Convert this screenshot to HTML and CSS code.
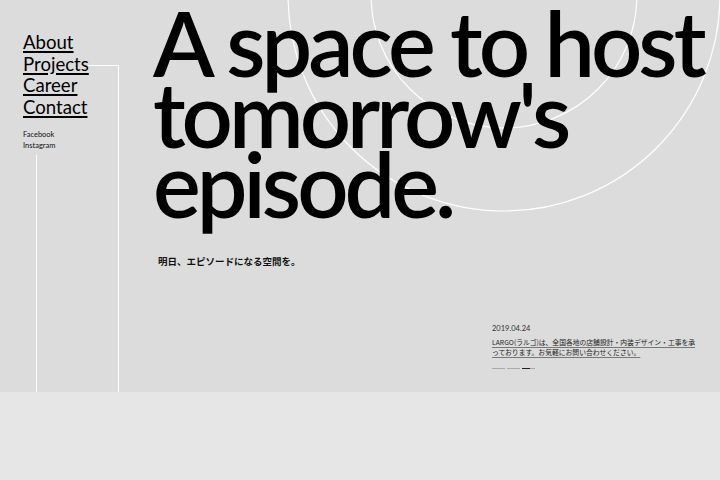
FILE: index.html
```html
<!DOCTYPE html>
<html lang="ja">
<head>
<meta charset="utf-8">
<title>LARGO</title>
<link rel="stylesheet" href="styles.css">
</head>
<body>
<section class="hero">
  <div class="frame" aria-hidden="true"></div>
  <svg class="rings" width="720" height="392" viewBox="0 0 720 392" aria-hidden="true">
    <circle cx="504" cy="-5" r="216" fill="none" stroke="#ffffff" stroke-width="1.2"/>
    <circle cx="504" cy="-5" r="133" fill="none" stroke="#ffffff" stroke-width="1.2"/>
  </svg>
  <nav class="nav">
    <ul class="menu">
      <li><a href="#">About</a></li>
      <li><a href="#">Projects</a></li>
      <li><a href="#">Career</a></li>
      <li><a href="#">Contact</a></li>
    </ul>
    <ul class="social">
      <li>Facebook</li>
      <li>Instagram</li>
    </ul>
  </nav>
  <main class="main">
    <h1 class="headline">A space to host<br>tomorrow's<br>episode.</h1>
    <p class="tagline">明日、エピソードになる空間を。</p>
    <div class="news">
      <p class="date">2019.04.24</p>
      <p class="news-text"><a href="#">LARGO(ラルゴ)は、全国各地の店舗設計・内装デザイン・工事を承<br>っております。お気軽にお問い合わせください。</a></p>
      <div class="dots"><span class="dot"></span><span class="dot"></span><span class="dot active"></span></div>
    </div>
  </main>
</section>
<section class="below"></section>
</body>
</html>
```

FILE: styles.css
```css
* { box-sizing: border-box; }
html, body { margin: 0; padding: 0; }
body {
  background: #e6e6e6;
  font-family: "Lato", "Noto Sans CJK JP", sans-serif;
  color: #000;
  width: 720px;
  height: 480px;
  overflow: hidden;
}
.hero {
  position: relative;
  height: 392px;
  background: #dcdcdc;
  display: flex;
  overflow: hidden;
}
.frame {
  position: absolute;
  left: 36px;
  top: 65px;
  width: 83px;
  height: 330px;
  border: 1px solid #ffffff;
  border-bottom: none;
  z-index: 0;
}
.rings {
  position: absolute;
  left: 0;
  top: 0;
  z-index: 0;
}
.nav {
  position: relative;
  z-index: 1;
  flex: 0 0 65px;
  width: 65px;
  margin-left: 23px;
  padding-top: 32px;
  align-self: flex-start;
  background: #dcdcdc;
  padding-bottom: 3px;
  white-space: nowrap;
}
.menu, .social { list-style: none; margin: 0; padding: 0; }
.menu li { font-size: 18.6px; line-height: 21.7px; }
.menu a {
  color: #000;
  text-decoration: underline;
  text-decoration-thickness: 1.5px;
  text-underline-offset: 2px;
}
.social { margin-top: 10px; }
.social li { font-size: 7.5px; line-height: 11.5px; color: #111; }
.main {
  position: relative;
  z-index: 1;
  margin-left: 65px;
  display: flex;
  flex-direction: column;
}
.headline {
  margin: 7px 0 0;
  font-size: 90px;
  line-height: 70.5px;
  font-weight: 600;
  letter-spacing: -4px;
  white-space: nowrap;
}
.tagline {
  margin: 35px 0 0 5px;
  font-family: "Noto Sans CJK JP", sans-serif;
  font-weight: 700;
  font-size: 9.5px;
  line-height: 14px;
  color: #111;
}
.news {
  margin: 56px 0 0 339px;
  font-family: "Noto Sans CJK JP", sans-serif;
  color: #222;
}
.date {
  margin: 0;
  font-family: "Lato", sans-serif;
  font-size: 7.5px;
  line-height: 10px;
  color: #333;
}
.news-text {
  margin: 3px 0 0;
  font-size: 6.8px;
  line-height: 10.7px;
  white-space: nowrap;
}
.news-text a {
  color: #222;
  text-decoration: underline;
  text-decoration-color: #777;
  text-underline-offset: 1.5px;
}
.dots {
  display: flex;
  gap: 2px;
  margin-top: 10px;
}
.dot {
  width: 13px;
  height: 1.5px;
  background: #aaaaaa;
}
.dot.active {
  background: linear-gradient(to right, #222 0, #222 8px, #aaa 8px);
}
.below { height: 88px; background: #e6e6e6; }
```
